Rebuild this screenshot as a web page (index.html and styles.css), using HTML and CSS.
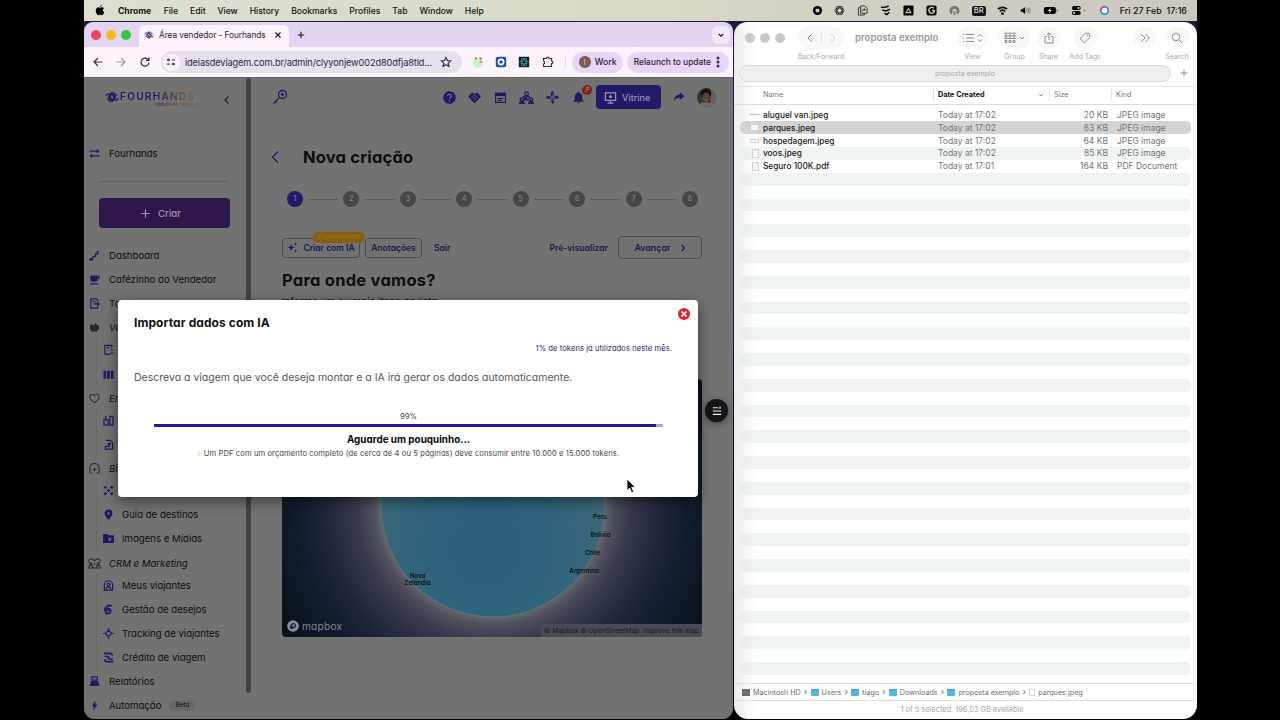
FILE: index.html
```html
<!DOCTYPE html>
<html lang="pt-BR">
<head>
  <meta charset="UTF-8">
  <title>Área vendedor - Fourhands</title>
  <link rel="stylesheet" href="styles.css">
</head>
<body>
  <div class="desktop">

    <!-- macOS menu bar -->
    <div class="menubar">
      <svg class="apple" viewBox="0 0 16 18"><path d="M11 0c.1 1.600-1.500 3.300-3 3.200C7.900 1.700 9.500.2 11 0zM8.200 4.600c.8 0 1.700-.9 3.200-.9 1.200 0 2.400.7 3.100 1.700-2.700 1.600-2.300 5.300.5 6.400-.7 2.200-2.400 4.800-4.100 4.800-1 0-1.500-.6-2.700-.6s-1.700.6-2.700.6C3.400 16.600 1 13 1 9.400 1 5.800 3.300 3.800 5.400 3.800c1.200 0 2.100.8 2.800.8z"/></svg>
      <div class="menus">
        <b>Chrome</b><span>File</span><span>Edit</span><span>View</span><span>History</span><span>Bookmarks</span><span>Profiles</span><span>Tab</span><span>Window</span><span>Help</span>
      </div>
      <div class="tray">
        <svg viewBox="0 0 12 12"><circle cx="6" cy="6" r="5"/><rect x="4" y="4" width="4" height="4" rx="1" fill="#d0cdc2"/></svg>
        <svg viewBox="0 0 12 12" class="line"><ellipse cx="6" cy="6" rx="5" ry="2.600"/><ellipse cx="6" cy="6" rx="5" ry="2.600" transform="rotate(60 6 6)"/><ellipse cx="6" cy="6" rx="5" ry="2.600" transform="rotate(120 6 6)"/></svg>
        <svg viewBox="0 0 12 12" class="line"><path d="M4 1h4.500L11 3.500V9H4zM4 3H1.500v8H8V9M5 7c1-2 2-2 4-2M7.500 3.500L9 5 7.500 6.500"/></svg>
        <svg viewBox="0 0 12 12" class="line bold"><path d="M1 2.500h5L9.500 1M2.500 5.500l4 1L11 4.500M5 9l2.500 1.500L10 8"/></svg>
        <svg viewBox="0 0 12 12"><rect x=".5" y=".5" width="11" height="11" rx="1.500"/><path d="M6 2.500L9.500 9h-7zM6 4.500L4.500 7.500h3z" fill="#d0cdc2" fill-rule="evenodd"/></svg>
        <svg viewBox="0 0 12 12"><rect x=".5" y=".5" width="11" height="11" rx="2"/><path d="M8.500 3.500A3.200 3.200 0 1 0 9 7.500V6H6.500" fill="none" stroke="#d0cdc2" stroke-width="1.500"/></svg>
        <svg viewBox="0 0 12 12"><path d="M2.500 10.500a5.500 5.500 0 1 1 7 0L8 7.500a2.300 2.300 0 1 0-4 0z" fill="#777"/><path d="M5 11V7h2v4z" fill="#777"/></svg>
        <span class="lang">BR</span>
        <svg viewBox="0 0 12 12" class="line bold"><path d="M1 4.500a7.500 7.500 0 0 1 10 0M3 7a4.500 4.500 0 0 1 6 0"/><circle cx="6" cy="9.300" r=".8" fill="#111"/></svg>
        <svg viewBox="0 0 14 12"><path d="M1 4.500h2L6.500 1.500v9L3 7.500H1z"/><path d="M8 4c1 1.300 1 2.700 0 4M9.700 3c1.500 2 1.500 4 0 6M11.500 2c2 2.600 2 5.400 0 8" fill="none" stroke="#555" stroke-width=".9"/></svg>
        <svg class="battery" viewBox="0 0 18 12"><rect x="1" y="2" width="13.500" height="8" rx="2.200"/><path d="M15.500 4.500v3c1-.3 1-2.700 0-3z"/><path d="M8.500 2.500L5.500 6.500h2L6.700 9.500l3.300-4H8z" fill="#eee"/></svg>
        <svg class="battery" viewBox="0 0 18 12"><rect x="1" y="1" width="10" height="4.500" rx="2.200"/><rect x="1" y="6.500" width="10" height="4.500" rx="2.200"/><circle cx="8.500" cy="3.200" r="1.200" fill="#d0cdc2"/><circle cx="3.500" cy="8.700" r="1.200" fill="#d0cdc2"/><circle cx="15" cy="6" r="1.400" fill="#e98b3a"/></svg>
        <svg viewBox="0 0 12 12"><circle cx="6" cy="6" r="4" fill="#dff" stroke="#3b74c9" stroke-width="1.700"/><path d="M2 5a4 4 0 0 1 5-3" fill="none" stroke="#d94c77" stroke-width="1.800"/><path d="M3 8.700a4 4 0 0 0 4 1.200" fill="none" stroke="#3bb3a4" stroke-width="1.800"/></svg>
      </div>
      <span class="clock">Fri 27 Feb&nbsp; 17:16</span>
    </div>

    <!-- Chrome window -->
    <div class="window chrome">
      <div class="tabstrip">
        <div class="lights"><i class="red"></i><i class="yellow"></i><i class="green"></i></div>
        <div class="tab">
          <svg class="favicon" viewBox="0 0 20 16"><use href="#swirl"/></svg>
          <span>Área vendedor - Fourhands</span>
          <svg class="x" viewBox="0 0 8 8"><path d="M1.500 1.500l5 5M6.500 1.500l-5 5"/></svg>
        </div>
        <svg class="newtab" viewBox="0 0 8 8"><path d="M4 .8v6.400M.8 4h6.400"/></svg>
        <div class="tabmenu"><svg viewBox="0 0 8 8"><path d="M1.800 3L4 5.200 6.200 3"/></svg></div>
      </div>
      <div class="toolbar">
        <svg viewBox="0 0 12 12"><path d="M10.500 6h-8M6 2L2 6l4 4"/></svg>
        <svg viewBox="0 0 12 12" class="off"><path d="M1.500 6h8M6 2l4 4-4 4"/></svg>
        <svg viewBox="0 0 12 12"><path d="M10 6.500A4 4 0 1 1 8.800 3.200L10 4.400M10 1.500v3H7"/></svg>
        <div class="omnibox">
          <span class="site"><svg viewBox="0 0 12 12"><path d="M1.500 3.500h3M7 3.500h4M1 8.500h4M8 8.500h3"/><circle cx="3" cy="3.500" r="1.200"/><circle cx="8.500" cy="8.500" r="1.200"/></svg></span>
          <span class="url">ideiasdeviagem.com.br/admin/clyyonjew002d80dfja8tld...</span>
          <svg viewBox="0 0 12 12"><path d="M6 1.500l1.400 3 3.200.4-2.400 2.200.7 3.300L6 8.800l-2.900 1.600.7-3.300L1.400 4.900l3.200-.4z"/></svg>
        </div>
        <div class="exts">
          <svg viewBox="0 0 12 12" class="fill"><circle cx="6" cy="6.500" r="5.300" fill="#c9f2cb"/><circle cx="4" cy="2.500" r="1" fill="#c0564b"/><circle cx="8.500" cy="2.500" r="1" fill="#39704b"/><circle cx="9" cy="6" r="1.300" fill="#e6a75a"/></svg>
          <svg viewBox="0 0 12 12" class="fill"><rect x=".8" y=".8" width="10.400" height="10.400" rx="2" fill="#1f4fae"/><circle cx="6" cy="6" r="2.600" fill="none" stroke="#fff" stroke-width="1.700"/></svg>
          <svg viewBox="0 0 12 12" class="fill"><rect x=".8" y=".8" width="10.400" height="10.400" fill="#10181c"/><g fill="none" stroke="#2e8b94" stroke-width=".9"><ellipse cx="6" cy="6" rx="4.200" ry="1.800"/><ellipse cx="6" cy="6" rx="4.200" ry="1.800" transform="rotate(60 6 6)"/><ellipse cx="6" cy="6" rx="4.200" ry="1.800" transform="rotate(120 6 6)"/></g></svg>
          <svg viewBox="0 0 12 12"><path d="M1.500 2.500h3c0-2 2.500-2 2.500 0h2.500V5c2 0 2 2.500 0 2.500v3h-8V8c1.500 0 1.500-3 0-3z"/></svg>
        </div>
        <div class="work"><i>I</i>Work</div>
        <div class="relaunch">Relaunch to update<svg viewBox="0 0 4 12"><circle cx="2" cy="2" r=".9"/><circle cx="2" cy="6" r=".9"/><circle cx="2" cy="10" r=".9"/></svg></div>
      </div>

      <div class="page">
        <aside class="sidebar">
          <div class="brand">
            <svg viewBox="0 0 20 16"><use href="#swirl"/></svg>
            <div class="brand-text"><b>FOURHANDS</b><small>ideias de viagem</small></div>
            <svg class="collapse" viewBox="0 0 8 10"><path d="M5.500 1.500L2 5l3.500 3.500"/></svg>
          </div>
          <div class="item account"><svg viewBox="0 0 12 12"><path d="M.5 3.500h10M1.500 8.500h10M8.500 1.800l2 1.700-2 1.700M3.500 6.800l-2 1.700 2 1.700"/></svg>Fourhands</div>
          <div class="rule"></div>
          <div class="create"><svg viewBox="0 0 10 10"><path d="M5 .5v9M.5 5h9"/></svg>Criar</div>

          <nav>
            <div class="item"><svg viewBox="0 0 12 12"><path d="M1 10.500h3v-3h3v-3h2.500v-3M8 2h3"/><circle cx="2" cy="10" r="1"/></svg>Dashboard</div>
            <div class="item"><svg viewBox="0 0 12 12"><path class="solid" d="M1.500 1.500h8v4a3 3 0 0 1-3 3h-2a3 3 0 0 1-3-3z"/><path d="M9.500 2.500h1.500v2.500H9.500M1 10.800h9"/></svg>Cafézinho do Vendedor</div>
            <div class="item"><svg viewBox="0 0 12 12"><path d="M9.500 4V2L8 1H2v10h7.500V9M5 6.500h6M9 4.500l2 2-2 2M4 4h3"/></svg>Ta</div>
            <div class="item group"><svg viewBox="0 0 12 12"><path class="solid" d="M1 4l2-2 2 2 2-3 2 2 2 1v3l-3 4-2-1-3 1-2-3z"/></svg>Ve</div>
            <div class="sub">
              <div class="item"><svg viewBox="0 0 12 12"><path d="M9.500 4V1.500H2v9.500h6M4 4h3M8.500 6.500h2M8.500 10h2.500"/></svg></div>
              <div class="item"><svg viewBox="0 0 12 12"><path class="solid" d="M.5 2h3v8.500h-3zM4.500 2h3v8.500h-3zM8.500 2h3v8.500h-3z"/></svg></div>
            </div>
            <div class="item group"><svg viewBox="0 0 12 12"><path d="M6 10.500C2 7.500.8 5.800.8 4 .8 1.300 4.500.5 6 3 7.500.5 11.200 1.300 11.200 4c0 1.800-1.200 3.500-5.200 6.500z"/></svg>En</div>
            <div class="sub">
              <div class="item"><svg viewBox="0 0 12 12"><path d="M1 5h4.500v6H1zM7.500 1.500H11V11H7.500zM3 1.500v3M2 2h2"/></svg></div>
              <div class="item"><svg viewBox="0 0 12 12"><path d="M3 1.500h5l2.500 2.500v7H2.500V8M2.500 8H7V4.500M5 6l2-1.500L8.500 6"/></svg></div>
            </div>
            <div class="item group"><svg viewBox="0 0 12 12"><path d="M1 11V5a5 4.500 0 0 1 10 0v6M1 11h2.500M8.500 11H11M6 5v4M4 7h4"/></svg>Bib</div>
            <div class="sub">
              <div class="item"><svg viewBox="0 0 12 12"><path d="M2.500.8v3.400M.8 2.500h3.400M9.500.8v3.400M7.800 2.500h3.400M6 4.300v3.400M4.300 6h3.400M2.500 7.800v3.400M.8 9.500h3.400M9.500 7.800v3.400M7.800 9.500h3.400"/></svg></div>
              <div class="item"><svg viewBox="0 0 12 12"><path class="solid" fill-rule="evenodd" d="M6 .5a4.300 4.300 0 0 1 4.300 4.300c0 2.500-4.300 7-4.300 7S1.700 7.300 1.700 4.800A4.300 4.300 0 0 1 6 .5zM6 3.500a1.300 1.300 0 1 0 0 2.600 1.300 1.300 0 0 0 0-2.600z"/></svg>Guia de destinos</div>
              <div class="item"><svg viewBox="0 0 12 12"><path class="solid" fill-rule="evenodd" d="M0 1h4.500L6 2.500h6v8.500H0zM7.500 4.500L6.800 6H5.200l1.200 1.200L6 9l1.500-1L9 9l-.4-1.800L9.800 6H8.200z"/></svg>Imagens e Mídias</div>
            </div>
            <div class="item group"><svg class="wide" viewBox="0 0 14 12"><path d="M1 5.500V3a2 2 0 0 1 2-2h1.500l2.500 2 2.500-2H11a2 2 0 0 1 2 2v2.500M1 11V9.500c0-1 1-1.500 2-1.500s2 .5 2 1.500V11M9 11V9.500c0-1 1-1.500 2-1.500s2 .5 2 1.500V11M0 11h14M7 5v3"/><circle cx="3" cy="6.300" r="1.200"/><circle cx="11" cy="6.300" r="1.200"/></svg>CRM e Marketing</div>
            <div class="sub">
              <div class="item"><svg viewBox="0 0 12 12"><path d="M1.500 11V5a4.500 4.200 0 0 1 9 0v6zM3.500 10c0-2 1-2.500 2.500-2.500S8.500 8 8.500 10"/><circle cx="6" cy="5" r="1.500"/></svg>Meus viajantes</div>
              <div class="item"><svg viewBox="0 0 12 12"><path class="thick" d="M9.500 2.500C6 0 2.500 3 4 6c1 1.700 4 1.300 3.500-.7M2.500 9.500C6 12 9.500 9 8 6c-1-1.700-4-1.300-3.500.7M2.300 4C1 7 2.500 8.500 4.500 9"/></svg>Gestão de desejos</div>
              <div class="item"><svg viewBox="0 0 12 12"><path d="M6 2.500L9.500 6 6 9.500 2.500 6zM6 0v3M6 9v3M0 6h3M9 6h3"/></svg>Tracking de viajantes</div>
              <div class="item"><svg viewBox="0 0 12 12"><path class="thick" d="M1 1.500h7c1.500 0 2 1 2 2.500M11.500 10.500H4c-1.500 0-2-1-2-2.500"/><path d="M1.500 5c2-1 2-1 4 0M10.500 7.500c-2 1-2 1-4 0"/><circle cx="6" cy="6.200" r=".8"/></svg>Crédito de viagem</div>
            </div>
            <div class="item"><svg viewBox="0 0 12 12"><path class="solid" d="M2 6.500h8l1.500 4.500H.5z"/><path d="M3 1h6v3.500H3zM2 6h8"/></svg>Relatórios</div>
            <div class="item"><svg viewBox="0 0 12 12"><path class="solid" d="M7 .5L3 7h2.500L4.500 11.500 9.500 5H6.800z"/></svg>Automação<span class="beta">Beta</span></div>
          </nav>
        </aside>
        <div class="scroll"></div>

        <main>
          <header class="topbar">
            <svg class="key" viewBox="0 0 16 16"><circle cx="10.500" cy="5.500" r="4"/><path d="M7.500 8.500l-6 6M2.500 12l2 2M9 5.500h3M10.500 4v3"/></svg>
            <div class="icons">
              <svg viewBox="0 0 14 14"><circle class="solid" cx="7" cy="7" r="6.800"/><path d="M5 5.500C5 3 9 3 9 5.500 9 7 7 7 7 8.500M7 9.800v1.400" stroke="#727272"/></svg>
              <svg viewBox="0 0 14 14"><path class="solid" d="M0 6l4.500-4.500L7 3l2.500-1.500L14 6l-7 7.500z"/><path d="M4 7l3-3 3.500 3.500M5.500 8.500l2-2M7 10l2-2" stroke="#727272" stroke-width=".7"/></svg>
              <svg viewBox="0 0 14 14"><path d="M1.700 2.500h10.600v9.800H1.700z"/><path class="solid" d="M1 2h12v3.500H1z"/><path d="M4 8h6M4 10h4"/></svg>
              <svg class="org" viewBox="0 0 16 14"><circle cx="8" cy="3" r="2"/><circle cx="3" cy="9" r="1.700"/><circle cx="13" cy="9" r="1.700"/><path class="thick" d="M.8 13.200c.5-2.500 4-2.500 4.500 0zM10.700 13.200c.5-2.500 4-2.500 4.500 0zM4.500 5.500l2 2 3-2 2 2M5.500 10l2-1.500 3 1.500"/></svg>
              <svg viewBox="0 0 14 14"><path class="solid" d="M7.500 6.500C4.500 5 4.500 1.500 7 0c2 1.500 2 4 .5 6.500zM7.500 7.500C9 4.500 12.500 4.500 14 7c-1.500 2-4 2-6.500.5zM6.500 7.500c3 1.500 3 5 .5 6.500-2-1.500-2-4-.5-6.500zM6.500 6.500C5 9.500 1.500 9.500 0 7c1.500-2 4-2 6.500-.5z"/><path d="M7 2.500v9M2.500 7h9" stroke="#727272" stroke-width=".5"/></svg>
              <div class="bell"><svg viewBox="0 0 14 14"><path class="solid" d="M7 .8c.8 0 1 .5 1 1 2 .5 3 2.200 3 4.200v3.500L12.500 11v.7h-11V11L3 9.500V6c0-2 1-3.700 3-4.200 0-.5.200-1 1-1zM5.500 12.300h3c-.3 1.600-2.700 1.600-3 0z"/></svg><i>:P</i></div>
            </div>
            <div class="vitrine"><svg viewBox="0 0 14 14"><path d="M1.500 2h11v8h-11zM7 10v3M4 13h6M7 4.200v3.600M5.200 6h3.600"/></svg>Vitrine</div>
            <svg class="share" viewBox="0 0 14 14"><path class="solid" d="M8 1.500L13.500 6 8 10.500V8C5 7.800 2.500 9 .8 12 1 7.500 3.500 4.500 8 4z"/></svg>
            <svg class="avatar" viewBox="0 0 20 20"><defs><clipPath id="face"><circle cx="10" cy="10" r="10"/></clipPath></defs><g clip-path="url(#face)"><path d="M0 0h20v20H0z" fill="#2c3a2e"/><path d="M14 0h6v20h-6z" fill="#64645f"/><circle cx="9.500" cy="6" r="5.500" fill="#15110f"/><ellipse cx="9.500" cy="9.800" rx="4.200" ry="5" fill="#5f4034"/><path d="M1 20c1-4 4-5 8.500-5s7.500 1 8.500 5z" fill="#6f6a66"/><path d="M8 12.300c1 .7 2 .7 3 0" fill="none" stroke="#94857d" stroke-width=".8"/></g></svg>
          </header>

          <div class="title"><svg viewBox="0 0 10 14"><path d="M8 1.500L2.500 7 8 12.500"/></svg><h1>Nova criação</h1></div>

          <div class="stepper">
            <i class="on">1</i><hr><i>2</i><hr><i>3</i><hr><i>4</i><hr><i>5</i><hr><i>6</i><hr><i>7</i><hr><i>8</i>
          </div>

          <div class="actions">
            <div class="btn ai"><svg viewBox="0 0 12 12"><path class="solid" d="M4.500 2l1 2.900 3 1.100-3 1.100-1 2.900-1-2.900L.5 6l3-1.100zM9.500.5l.5 1.500 1.500.5-1.500.5L9.500 4.500 9 3l-1.500-.5L9 2zM9.500 7.800l.5 1.300 1.500.6-1.500.5-.5 1.500-.5-1.500-1.500-.5L9 9.100z"/></svg>Criar com IA<span class="tag">Experimental</span></div>
            <div class="btn notes">Anotações</div>
            <span class="exit">Sair</span>
            <span class="preview">Pré-visualizar</span>
            <div class="btn next">Avançar<svg viewBox="0 0 6 8"><path d="M1.500 1L4.500 4l-3 3"/></svg></div>
          </div>

          <h2>Para onde vamos?</h2>
          <p class="hint">Informe um ou mais itens da lista</p>

          <div class="map">
            <svg viewBox="0 0 420 258">
              <defs>
                <radialGradient id="space" gradientUnits="userSpaceOnUse" cx="211" cy="126" r="250">
                  <stop offset=".44" stop-color="#666b70"/>
                  <stop offset=".48" stop-color="#4f505b"/>
                  <stop offset=".55" stop-color="#373a4d"/>
                  <stop offset=".67" stop-color="#20263c"/>
                  <stop offset=".8" stop-color="#101b2b"/>
                  <stop offset="1" stop-color="#080f1a"/>
                </radialGradient>
                <radialGradient id="ocean" gradientUnits="userSpaceOnUse" cx="205" cy="170" r="150">
                  <stop offset="0" stop-color="#295f80"/>
                  <stop offset=".5" stop-color="#30647b"/>
                  <stop offset="1" stop-color="#456b78"/>
                </radialGradient>
              </defs>
              <path d="M0 0h420v258H0z" fill="url(#space)"/>
              <circle cx="211" cy="126" r="112" fill="url(#ocean)" stroke="#777b7b" stroke-opacity=".4"/>
              <g class="places">
                <text x="318" y="140">Peru</text>
                <text x="318.500" y="157.500">Bolívia</text>
                <text x="310.500" y="175.500">Chile</text>
                <text x="302" y="193.500">Argentina</text>
                <text x="135.500" y="198.500">Nova</text>
                <text x="135.500" y="205.500">Zelândia</text>
              </g>
            </svg>
            <div class="mapbox"><svg viewBox="0 0 12 12"><circle cx="6" cy="6" r="5.800" fill="#8c8f95"/><path d="M3 9c-.5-4 1.500-6.300 4-6 2.500.5 2.500 3.500 1 4.800C6.500 9 4.500 9 3 9z" fill="#22283a"/><circle cx="6.600" cy="5.400" r="1.200" fill="#8c8f95"/></svg>mapbox</div>
            <div class="credits">© Mapbox © OpenStreetMap &nbsp;Improve this map</div>
          </div>
        </main>
      </div>

      <div class="fab"><svg viewBox="0 0 12 12"><path d="M1 2h6M1 6h10M1 10h10"/><circle cx="9.500" cy="2" r="1.600"/></svg></div>

      <!-- AI import dialog -->
      <div class="modal">
        <div class="modal-head">
          <h3>Importar dados com IA</h3>
          <svg viewBox="0 0 14 14"><circle cx="7" cy="7" r="6.900" fill="#cf2c31"/><path d="M4.500 4.500l5 5M9.500 4.500l-5 5"/></svg>
        </div>
        <p class="tokens">1% de tokens já utilizados neste mês.</p>
        <p class="describe">Descreva a viagem que você deseja montar e a IA irá gerar os dados automaticamente.</p>
        <div class="progress">
          <span class="percent">99%</span>
          <div class="track"><div class="bar" style="width: 98.700%"></div></div>
          <b>Aguarde um pouquinho...</b>
          <p><i class="bulb"></i>Um PDF com um orçamento completo (de cerca de 4 ou 5 páginas) deve consumir entre 10.000 e 15.000 tokens.</p>
        </div>
      </div>
    </div>

    <!-- Finder window -->
    <div class="window finder">
      <div class="ftools">
        <div class="lights"><i></i><i></i><i></i></div>
        <div class="tool nav"><div class="pill"><svg viewBox="0 0 8 12"><path d="M6 2L2 6l4 4"/></svg><u></u><svg class="off" viewBox="0 0 8 12"><path d="M2 2l4 4-4 4"/></svg></div><span>Back/Forward</span></div>
        <b>proposta exemplo</b>
        <div class="tool view"><div class="pill"><svg viewBox="0 0 12 12"><path d="M1 2.500h1M4 2.500h8M1 6h1M4 6h8M1 9.500h1M4 9.500h8"/></svg><svg class="small" viewBox="0 0 6 12"><path d="M1 4.500l2-2 2 2M1 7.500l2 2 2-2"/></svg></div><span>View</span></div>
        <div class="tool group-by"><div class="pill"><svg viewBox="0 0 12 12"><path d="M0 1.200h12M0 6.500h12M1 3h2v2H1zM5 3h2v2H5zM9 3h2v2H9zM1 8.500h2v2H1zM5 8.500h2v2H5zM9 8.500h2v2H9z"/></svg><svg class="small" viewBox="0 0 6 12"><path d="M1 5l2 2 2-2"/></svg></div><span>Group</span></div>
        <div class="tool shr"><div class="pill"><svg viewBox="0 0 12 12"><path d="M4 4.500H2V11h8V4.500H8M6 8V.8M4 2.700L6 .8l2 1.900"/></svg></div><span>Share</span></div>
        <div class="tool tags"><div class="pill"><svg viewBox="0 0 12 12"><path d="M6.500 1.200l4 .3.300 4L5.500 11 1 6.500z"/><circle cx="8.500" cy="3.600" r=".4"/></svg></div><span>Add Tags</span></div>
        <div class="tool more"><div class="pill"><svg viewBox="0 0 12 12"><path d="M2 2l4 4-4 4M6.500 2l4 4-4 4"/></svg></div><span>&nbsp;</span></div>
        <div class="tool find"><div class="pill"><svg viewBox="0 0 12 12"><circle cx="5" cy="5" r="3.800"/><path d="M8 8l3.200 3.200"/></svg></div><span>Search</span></div>
      </div>
      <div class="ftabs"><div>proposta exemplo</div><svg viewBox="0 0 10 10"><path d="M5 1.500v7M1.500 5h7"/></svg></div>
      <div class="cols"><span>Name</span><b>Date Created<svg viewBox="0 0 6 6"><path d="M1 2l2 2 2-2"/></svg></b><span>Size</span><span>Kind</span></div>
      <div class="files" id="files"></div>
      <div class="pathbar">
        <i class="disk"></i>Macintosh HD<em>›</em><i class="folder"></i>Users<em>›</em><i class="folder"></i>tiago<em>›</em><i class="folder"></i>Downloads<em>›</em><i class="folder"></i>proposta exemplo<em>›</em><i class="doc"></i>parques.jpeg
      </div>
      <div class="status">1 of 5 selected, 196,03 GB available</div>
    </div>

    <svg class="cursor" viewBox="0 0 10 16"><path d="M1 1v11.500l2.700-2.500 2 4.700 2-.9-2-4.500h3.600z"/></svg>
  </div>

  <svg class="defs" width="0" height="0">
    <symbol id="swirl" viewBox="0 0 20 16"><g fill="none" stroke="currentColor" stroke-width="1.800" stroke-linecap="round"><path d="M12 8a2.500 2.500 0 1 0-4 1.500M8 8a2.500 2.500 0 1 0 4-1M14 8c0-5-7-6-9-1M6 8c0 5 7 6 9 1M6 4C4 3 2 4 1.500 6M14 12c2 1 4 0 4.500-2M8 2.500c3-1.500 7 0 8.500 3.500M12 13.500c-3 1.500-7 0-8.500-3.500"/></g></symbol>
  </svg>

  <script>
    const files = [
      ["aluguel van.jpeg", "Today at 17:02", "20 KB", "JPEG image", "flat"],
      ["parques.jpeg", "Today at 17:02", "63 KB", "JPEG image", "photo"],
      ["hospedagem.jpeg", "Today at 17:02", "64 KB", "JPEG image", "low"],
      ["voos.jpeg", "Today at 17:02", "85 KB", "JPEG image", "doc"],
      ["Seguro 100K.pdf", "Today at 17:01", "164 KB", "PDF Document", "doc"]
    ];
    const list = document.getElementById("files");

    // 44 rows fill the list, the ones after the files are only stripes
    for (let i = 0; i < 44; i++) {
      const row = document.createElement("div");
      row.className = "file" + (i === 1 ? " selected" : "");
      if (files[i]) {
        const [name, date, size, kind, icon] = files[i];
        row.innerHTML = `<i class="${icon}"></i><b>${name}</b><span>${date}</span><span class="size">${size}</span><span>${kind}</span>`;
      }
      list.appendChild(row);
    }
  </script>
</body>
</html>
```
FILE: styles.css
```css
* {
  box-sizing: border-box;
}

body {
  margin: 0;
  background: #000;
  font-family: Inter, "Liberation Sans", sans-serif;
  overflow: hidden;
}

h1, h2, h3, p {
  margin: 0;
}

i, em {
  font-style: normal;
}

svg {
  display: block;
  flex: none;
}

.defs {
  position: absolute;
}

.desktop {
  position: relative;
  width: 1113px;
  height: 720px;
  margin-left: 84px;
  background: linear-gradient(#1c1745 0, #1c1745 300px, #050508 600px);
  white-space: nowrap;
  overflow: hidden;
}

/* menu bar */
.menubar {
  display: flex;
  align-items: center;
  height: 21px;
  padding: 0 10px 0 11px;
  background: linear-gradient(90deg, #dde0d0, #d9dccd 30%, #dbd9c9 50%, #cfccc2 75%, #cbc8c0);
  font-size: 8.600px;
  font-weight: 500;
  color: #111;
}

.apple {
  width: 10px;
  height: 11px;
  margin-right: 13px;
}

.menus {
  display: flex;
  gap: 11.900px;
}

.menus b {
  margin-right: .5px;
}

.tray {
  display: flex;
  align-items: center;
  gap: 11.900px;
  margin-left: auto;
}

.tray svg {
  width: 11px;
  height: 11px;
}

.tray .battery {
  width: 16px;
}

.tray .line {
  fill: none;
  stroke: #333;
  stroke-width: 1;
}

.tray .bold {
  stroke: #111;
  stroke-width: 1.700;
}

.lang {
  padding: 0 2px;
  border-radius: 2px;
  background: #151515;
  color: #ddd;
  font-size: 7.500px;
  line-height: 10px;
}

.clock {
  width: 68px;
  margin-left: 9px;
  font-size: 8.950px;
  text-align: right;
}

/* windows */
.window {
  position: absolute;
  top: 22px;
  display: flex;
  flex-direction: column;
  overflow: hidden;
}

.chrome {
  left: 0;
  width: 649px;
  height: 697px;
  border-radius: 9px 9px 11px 11px;
  background: #727272;
}

.lights {
  display: flex;
  gap: 5px;
}

.lights i {
  width: 10px;
  height: 10px;
  border-radius: 50%;
  background: #c9c9c9;
}

.lights .red { background: #e6455f; }
.lights .yellow { background: #efbe13; }
.lights .green { background: #33c749; }

.tabstrip {
  display: flex;
  align-items: center;
  height: 25px;
  padding: 0 3px 0 7px;
  background: #e3d5f1;
}

.tab {
  display: flex;
  align-items: center;
  align-self: flex-end;
  width: 150px;
  height: 22px;
  margin-left: 8px;
  padding: 0 7px 2px 5px;
  border-radius: 6px 6px 0 0;
  background: #fcf3fd;
  font-size: 8.400px;
  letter-spacing: -.1px;
  color: #2c2730;
}

.favicon {
  width: 10px;
  height: 8px;
  margin-right: 5px;
  color: #27235f;
}

.tabstrip .x, .newtab, .tabmenu svg {
  width: 8px;
  height: 8px;
  fill: none;
  stroke: #1f1b24;
  stroke-width: 1.200;
}

.tabstrip .x {
  margin-left: auto;
}

.newtab {
  margin-left: 8px;
}

.tabmenu {
  display: grid;
  place-items: center;
  width: 18px;
  height: 18px;
  margin-left: auto;
  border-radius: 6px;
  background: #f2e7fb;
}

.toolbar {
  display: flex;
  align-items: center;
  height: 30px;
  padding: 0 4px 0 8px;
  background: #fcf3fd;
  font-size: 9px;
  font-weight: 500;
}

.toolbar svg {
  width: 12px;
  height: 12px;
  fill: none;
  stroke: #37303c;
  stroke-width: 1.200;
}

.toolbar > svg {
  margin-right: 11.300px;
}

.toolbar .off {
  stroke: #9c95a2;
}

.omnibox {
  display: flex;
  align-items: center;
  width: 301px;
  height: 22px;
  margin-right: 10px;
  margin-left: -1px;
  padding: 0 10px 0 2px;
  border-radius: 11px;
  background: #e8e0ed;
  font-size: 9.200px;
  font-weight: 400;
  letter-spacing: -.1px;
  color: #2b2730;
}

.omnibox > svg {
  margin-left: auto;
}

.site {
  display: grid;
  place-items: center;
  width: 17px;
  height: 17px;
  margin-right: 5px;
  border-radius: 50%;
  background: #fcf3fd;
}

.site svg {
  width: 10px;
  height: 10px;
}

.exts {
  display: flex;
  gap: 11.300px;
  padding-right: 11px;
  border-right: 1px solid #e5dbe9;
}

.exts .fill {
  stroke: none;
}

.work, .relaunch {
  display: flex;
  align-items: center;
  height: 21px;
  border-radius: 11px;
  background: #e6d6f7;
  color: #2a2135;
}

.work {
  width: 51px;
  margin-left: 6px;
  padding-left: 7px;
  font-size: 8.700px;
}

.work i {
  display: grid;
  place-items: center;
  width: 12px;
  height: 12px;
  margin-right: 4px;
  border-radius: 50%;
  background: #7d5a50;
  color: #d8c8c0;
  font-size: 7px;
}

.relaunch {
  width: 102px;
  margin-left: 4px;
  padding-left: 7px;
  font-size: 8.400px;
}

.relaunch svg {
  width: 4px;
  margin-left: 5px;
  fill: #1f1b24;
}

/* page behind the dialog */
.page {
  display: flex;
  flex: 1;
  min-height: 0;
  border-top: 1px solid #5f5f5f;
  background: #727272;
  font-feature-settings: "cv11";
  color: #0d0d0d;
}

.page svg {
  fill: none;
  stroke: #201a63;
  stroke-width: 1.300;
}

.page .solid {
  fill: #201a63;
  stroke: none;
}

.page .thick {
  stroke-width: 1.800;
}

.sidebar {
  width: 162px;
}

.brand {
  display: flex;
  align-items: center;
  height: 20px;
  margin: 9px 0 0 21px;
}

.brand > svg {
  width: 14px;
  height: 12px;
  stroke: none;
  color: #201a63;
}

.brand-text {
  display: flex;
  flex-direction: column;
  width: 79px;
  margin: 4px 0 0 1px;
  background: linear-gradient(90deg, #231d62 45%, #69453f 75%, #7e6c41);
  background-clip: text;
  -webkit-background-clip: text;
  color: transparent;
}

.brand-text b {
  font-size: 10px;
  font-weight: 600;
  line-height: 10px;
  letter-spacing: 1.300px;
}

.brand-text small {
  font-size: 5px;
  line-height: 6px;
  letter-spacing: .2px;
  text-align: right;
}

.brand .collapse {
  width: 8px;
  height: 10px;
  margin: 5px 0 0 24px;
  stroke: #222;
  color: inherit;
}

.item {
  display: flex;
  align-items: center;
  height: 24.160px;
  padding-left: 5px;
  font-size: 9.600px;
}

.item > svg {
  width: 11px;
  height: 11px;
  margin-right: 9px;
}

.item > .wide {
  width: 13px;
  margin: 0 8px 0 -1px;
}

.account {
  margin-top: 34px;
}

.rule {
  height: 1px;
  margin: 15.500px 18px 16.500px 15px;
  background: #606060;
}

.create {
  display: flex;
  align-items: center;
  justify-content: center;
  gap: 8px;
  width: 131px;
  height: 30px;
  margin-left: 15px;
  padding-right: 7px;
  border-radius: 4px;
  background: #2f174c;
  color: #a393b0;
  font-size: 9.600px;
  font-weight: 500;
}

.create svg {
  width: 9px;
  height: 9px;
  stroke: #a393b0;
}

nav {
  margin-top: 15.200px;
}

.group {
  font-style: italic;
}

.group svg {
  stroke: #292929;
  stroke-width: 1.100;
}

.group .solid {
  fill: #292929;
}

.sub {
  margin: -2.150px 0 0 12px;
  border-left: 1px solid #6a6a6a;
}

.sub .item {
  padding-left: 6px;
}

.sub .item > svg {
  margin-right: 8px;
}

.beta {
  margin-left: 8px;
  padding: 0 6px;
  border-radius: 6px;
  background: #686868;
  font-size: 6.500px;
  line-height: 11px;
}

.scroll {
  width: 5px;
  height: 615px;
  border-radius: 3px;
  background: #404440;
}

main {
  width: 482px;
  padding: 6px 31px 0 31px;
}

.topbar {
  display: flex;
  align-items: center;
  height: 26px;
  margin: 0 -15px 0 -10px;
}

.topbar .key {
  width: 16px;
  height: 16px;
}

.icons {
  display: flex;
  align-items: center;
  gap: 12.900px;
  margin: 0 11px 0 auto;
}

.icons svg {
  width: 13px;
  height: 13px;
}

.icons .org {
  width: 15px;
  margin: 0 -1px;
}

.bell {
  position: relative;
}

.bell i {
  position: absolute;
  top: -6px;
  right: -7px;
  width: 10px;
  height: 10px;
  border-radius: 50%;
  background: #7d211f;
  color: #b5a09f;
  font-size: 5.500px;
  line-height: 10px;
  text-align: center;
}

.vitrine {
  display: flex;
  align-items: center;
  gap: 5px;
  width: 65px;
  height: 24px;
  padding-left: 8px;
  border-radius: 4px;
  background: #211c68;
  color: #9996bc;
  font-size: 9px;
  font-weight: 500;
}

.vitrine svg {
  width: 13px;
  height: 13px;
  stroke: #9996bc;
}

.share {
  width: 12px;
  height: 12px;
  margin: 0 12px;
}

.topbar .avatar {
  width: 19px;
  height: 19px;
  margin-right: 1px;
  stroke: none;
}

.title {
  display: flex;
  align-items: center;
  height: 24px;
  margin: 35px 0 0 -12px;
}

.title svg {
  width: 10px;
  height: 14px;
  margin-right: 23px;
}

h1 {
  font-size: 16.500px;
  letter-spacing: .2px;
}

.stepper {
  display: flex;
  align-items: center;
  height: 16px;
  margin: 22px 4px 0 5px;
}

.stepper i {
  width: 16px;
  height: 16px;
  border-radius: 50%;
  background: #474747;
  color: #8a8a8a;
  font-size: 7px;
  line-height: 16px;
  text-align: center;
}

.stepper .on {
  background: #211c68;
}

.stepper hr {
  flex: 1;
  margin: 0 5px;
  border: 0;
  border-top: 1px solid #5b5b5b;
}

.actions {
  display: flex;
  align-items: center;
  height: 24px;
  margin-top: 28.500px;
  color: #1c1750;
  font-size: 8.500px;
  font-weight: 600;
}

.btn {
  display: flex;
  align-items: center;
  justify-content: center;
  height: 20px;
  border: 1px solid #4b4b59;
  border-radius: 4px;
}

.ai {
  position: relative;
  width: 78px;
  gap: 5px;
}

.ai svg {
  width: 11px;
  height: 11px;
}

.tag {
  position: absolute;
  top: -7px;
  right: -6px;
  width: 52px;
  height: 11px;
  border-radius: 6px;
  background: #84600e;
  color: #98721f;
  font-size: 6.500px;
  line-height: 11px;
  text-align: center;
}

.notes {
  width: 57px;
  margin-left: 5px;
}

.exit {
  margin-left: 12px;
}

.preview {
  margin: 0 10px 0 auto;
  letter-spacing: .05px;
}

.next {
  width: 84px;
  height: 23px;
  gap: 9px;
  font-size: 8.900px;
}

.next svg {
  width: 6px;
  height: 8px;
}

h2 {
  margin-top: 9px;
  font-size: 16.500px;
  line-height: 22px;
  letter-spacing: .25px;
}

.hint {
  margin-top: 5px;
  font-size: 9.500px;
  letter-spacing: .2px;
  line-height: 12px;
}

.map {
  position: relative;
  width: 420px;
  height: 258px;
  margin-top: 71.500px;
  border-radius: 4px;
  overflow: hidden;
}

.map > svg {
  width: 420px;
  height: 258px;
  stroke: none;
}

.places {
  fill: #0b1114;
  font-size: 6.200px;
  font-weight: 600;
  text-anchor: middle;
}

.mapbox {
  position: absolute;
  bottom: 5px;
  left: 5px;
  display: flex;
  align-items: center;
  gap: 3px;
  color: #85888f;
  font-size: 10.200px;
  letter-spacing: .2px;
}

.mapbox svg {
  width: 12px;
  height: 12px;
  stroke: none;
}

.credits {
  position: absolute;
  right: 0;
  bottom: 0;
  width: 161px;
  height: 13px;
  background: #454c58;
  color: #15191f;
  font-size: 6.850px;
  font-feature-settings: normal;
  line-height: 13px;
  text-align: center;
}

.fab {
  position: absolute;
  top: 377px;
  left: 621px;
  display: grid;
  place-items: center;
  width: 23px;
  height: 23px;
  border-radius: 50%;
  background: #151515;
  box-shadow: 0 2px 7px rgba(0,0,0,0.4);
}

.fab svg {
  width: 10px;
  height: 10px;
  stroke: #eee;
  stroke-width: 1.300;
}

.fab circle {
  fill: #5b9be0;
  stroke: none;
}

/* dialog */
.modal {
  position: absolute;
  top: 278px;
  left: 34px;
  width: 580px;
  height: 197px;
  padding: 7px 7px 0 16px;
  border-radius: 4px;
  background: #fff;
  box-shadow: 0 4px 14px rgba(0,0,0,0.5);
  font-feature-settings: "cv11";
  color: #111;
}

.modal-head {
  display: flex;
  justify-content: space-between;
}

.modal-head svg {
  width: 14px;
  height: 14px;
  stroke: #fff;
  stroke-width: 1.600;
}

h3 {
  margin-top: 8px;
  font-size: 12px;
  line-height: 16px;
  letter-spacing: .08px;
}

.tokens {
  margin: 12px 19px 0 0;
  color: #2c1a6b;
  font-size: 7.600px;
  letter-spacing: .06px;
  line-height: 11px;
  text-align: right;
}

.describe {
  margin-top: 16px;
  color: #555;
  font-size: 10.500px;
  line-height: 16px;
}

.progress {
  display: flex;
  flex-direction: column;
  align-items: center;
  margin: 26px 28px 0 20px;
  color: #444;
  font-size: 7.600px;
  line-height: 9px;
}

.track {
  width: 100%;
  height: 3px;
  margin: 3px 0 6px;
  background: #aba3d8;
}

.bar {
  height: 100%;
  background: #2a1596;
}

.progress b {
  color: #0b0b0b;
  font-size: 9.900px;
  line-height: 12px;
}

.progress p {
  margin-top: 4px;
  letter-spacing: .09px;
}

.bulb {
  display: inline-block;
  width: 2px;
  height: 5px;
  margin-right: 4px;
  background: #efe9bb;
}

/* Finder */
.finder {
  left: 650px;
  width: 463px;
  height: 697px;
  border-radius: 13px 13px 14px 14px;
  background: linear-gradient(90deg, #ececec, #fff 22px);
  color: #747474;
  font-size: 8.500px;
}

.finder svg {
  fill: none;
  stroke: #8c8c8c;
  stroke-width: 1;
}

.ftools {
  display: flex;
  height: 41px;
  padding: 4px 7px 0 11px;
}

.ftools .lights {
  margin: 7px 12px 0 0;
}

.ftools b {
  width: 90px;
  margin: 0 12px 0 11px;
  color: #999;
  font-size: 9.600px;
  font-weight: 600;
  line-height: 24px;
}

.tool {
  display: flex;
  flex-direction: column;
  align-items: center;
  color: #a9a9a9;
  font-size: 7.100px;
}

.tool span {
  margin-top: 3px;
  line-height: 10px;
}

.pill {
  display: flex;
  align-items: center;
  justify-content: center;
  gap: 3px;
  min-width: 23px;
  height: 23px;
  border-radius: 12px;
  background: #f8f8f8;
}

.pill svg {
  width: 12px;
  height: 12px;
}

.pill .small {
  width: 6px;
}

.pill .off {
  stroke: #ccc;
}

.pill u {
  width: 1px;
  height: 11px;
  background: #e5e5e5;
}

.nav { width: 46px; margin-left: 1px; }
.nav .pill { width: 46px; gap: 5px; }
.view { width: 31px; }
.view .pill { width: 31px; }
.group-by { width: 31px; margin-left: 11px; }
.group-by .pill { width: 31px; }
.shr { width: 23px; margin-left: 7px; }
.tags { width: 32px; margin-left: 9px; }
.more { width: 23px; margin-left: auto; }
.find { width: 26px; margin-left: 8px; }

.ftabs {
  display: flex;
  align-items: center;
  height: 23px;
  padding: 0 8px 2px 5px;
}

.ftabs div {
  width: 432px;
  height: 17px;
  border: 1px solid #d9d9d9;
  border-radius: 9px;
  background: #eee;
  color: #a5a5a5;
  font-size: 7.100px;
  line-height: 15px;
  padding-left: 20px;
  text-align: center;
}

.ftabs svg {
  width: 10px;
  height: 10px;
  margin-left: auto;
}

.cols {
  display: grid;
  grid-template-columns: 199px 116px 62px 1fr;
  align-items: center;
  height: 19px;
  border-top: 1px solid #e4e4e4;
  border-bottom: 1px solid #dcdcdc;
  font-size: 7.300px;
}

.cols > * {
  height: 12px;
  padding-left: 4px;
  border-left: 1px solid #e0e0e0;
  line-height: 12px;
}

.cols > :first-child {
  padding-left: 29px;
  border: 0;
}

.cols b {
  display: flex;
  align-items: center;
  justify-content: space-between;
  padding-right: 5px;
  color: #111;
}

.cols svg {
  width: 6px;
  height: 6px;
}

.files {
  height: 579px;
  padding: 3.500px 6px 0;
}

.file {
  display: grid;
  grid-template-columns: 23px 175px 110px 60px 1fr;
  align-items: center;
  height: 12.880px;
  border-radius: 5px;
  line-height: 12px;
}

.file:nth-child(even) {
  background: rgba(226,234,231,0.550);
}

.file.selected {
  background: #d3d3d3;
}

.file b {
  color: #181818;
  font-size: 8.300px;
  font-weight: 500;
}

.file .size {
  text-align: right;
}

.file span:last-child {
  padding-left: 9px;
}

.file i {
  justify-self: end;
  width: 9px;
  height: 7px;
  margin-right: 4px;
  border: 1px solid #d2d2d2;
  background: #f6f6f6;
}

.file .flat {
  height: 1px;
  border-width: 1px 0 0;
  border-color: #bbb;
}

.file .low {
  height: 4px;
}

.file .doc {
  width: 7px;
  height: 9px;
}

.pathbar {
  display: flex;
  align-items: center;
  height: 18px;
  padding-left: 8px;
  border-top: 1px solid #dedede;
  border-bottom: 1px solid #dedede;
  color: #6c6c6c;
  font-size: 7.200px;
}

.pathbar em {
  margin: 0 3.300px 1px 3px;
  font-size: 9px;
}

.pathbar i {
  width: 8px;
  height: 7px;
  margin-right: 3px;
}

.disk {
  background: #6e6e6e;
}

.folder {
  border-top: 1px solid #3f9fc4;
  border-radius: 1px;
  background: #52b8dc;
}

.pathbar .doc {
  width: 6px;
  border: 1px solid #d5d5d5;
}

.status {
  color: #a5a5a5;
  font-size: 7.400px;
  line-height: 18px;
  text-align: center;
  padding-right: 7px;
}

.cursor {
  position: absolute;
  top: 478px;
  left: 542px;
  width: 10px;
  height: 16px;
  fill: #000;
  stroke: #fff;
  stroke-width: .8;
}
```
